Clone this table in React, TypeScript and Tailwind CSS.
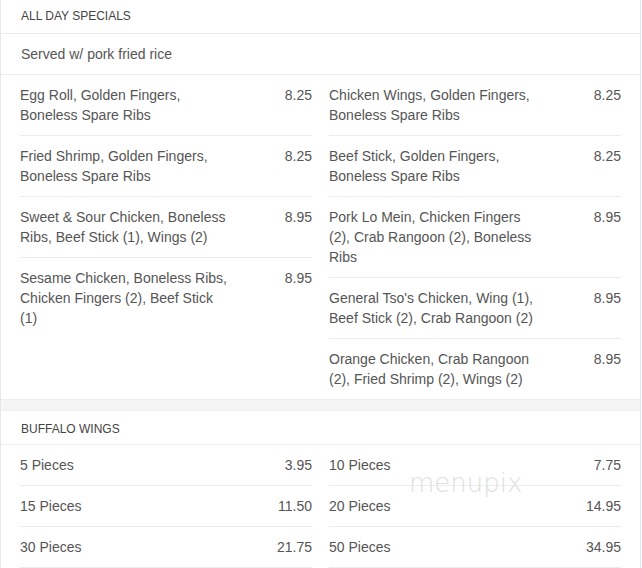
import React from 'react';

type Item = { name: string; price: string };

const specialsLeft: Item[] = [
  { name: 'Egg Roll, Golden Fingers, Boneless Spare Ribs', price: '8.25' },
  { name: 'Fried Shrimp, Golden Fingers, Boneless Spare Ribs', price: '8.25' },
  { name: 'Sweet & Sour Chicken, Boneless Ribs, Beef Stick (1), Wings (2)', price: '8.95' },
  { name: 'Sesame Chicken, Boneless Ribs, Chicken Fingers (2), Beef Stick (1)', price: '8.95' },
];

const specialsRight: Item[] = [
  { name: 'Chicken Wings, Golden Fingers, Boneless Spare Ribs', price: '8.25' },
  { name: 'Beef Stick, Golden Fingers, Boneless Spare Ribs', price: '8.25' },
  { name: 'Pork Lo Mein, Chicken Fingers (2), Crab Rangoon (2), Boneless Ribs', price: '8.95' },
  { name: "General Tso's Chicken, Wing (1), Beef Stick (2), Crab Rangoon (2)", price: '8.95' },
  { name: 'Orange Chicken, Crab Rangoon (2), Fried Shrimp (2), Wings (2)', price: '8.95' },
];

const wingsLeft: Item[] = [
  { name: '5 Pieces', price: '3.95' },
  { name: '15 Pieces', price: '11.50' },
  { name: '30 Pieces', price: '21.75' },
];

const wingsRight: Item[] = [
  { name: '10 Pieces', price: '7.75' },
  { name: '20 Pieces', price: '14.95' },
  { name: '50 Pieces', price: '34.95' },
];

const ItemList: React.FC<{ items: Item[]; bottomBorder?: boolean }> = ({ items, bottomBorder }) => (
  <div className="flex flex-col">
    {items.map((item, i) => (
      <div
        key={item.name}
        className={`flex justify-between items-start py-[10px] ${i < items.length - 1 || bottomBorder ? 'border-b border-[#ececec]' : ''}`}
      >
        <span className="w-[210px] leading-[20px]">{item.name}</span>
        <span className="leading-[20px]">{item.price}</span>
      </div>
    ))}
  </div>
);

const SectionHeader: React.FC<{ title: string; first?: boolean }> = ({ title, first }) => (
  <div
    className={`px-5 border-b border-[#ececec] text-[12px] leading-[15px] text-[#444] uppercase ${first ? 'pt-[9px] pb-[9px]' : 'pt-[11px] pb-[7px]'}`}
  >
    {title}
  </div>
);

export default function App() {
  return (
    <div
      className="w-[642px] h-[568px] overflow-hidden bg-white text-[14px] text-[#555]"
      style={{ fontFamily: '"Liberation Sans", Arial, sans-serif' }}
    >
      <div className="relative w-[641px] border-x border-[#e6e6ec]">
        <section>
          <SectionHeader title="All Day Specials" first />
          <div className="px-5 py-[10px] leading-[20px] border-b border-[#ececec]">Served w/ pork fried rice</div>
          <div className="grid grid-cols-2 gap-x-[17px] px-[19px]">
            <ItemList items={specialsLeft} />
            <ItemList items={specialsRight} />
          </div>
        </section>

        <div className="h-[12px] bg-[#f5f5f5] border-y border-[#eeeeee]" />

        <section>
          <SectionHeader title="Buffalo Wings" />
          <div className="grid grid-cols-2 gap-x-[17px] px-[19px]">
            <ItemList items={wingsLeft} bottomBorder />
            <ItemList items={wingsRight} bottomBorder />
          </div>
        </section>

        <div
          className="absolute left-[408px] top-[470px] text-[26px] leading-none text-[#e0e0e0] pointer-events-none"
          style={{ fontFamily: '"DejaVu Sans", sans-serif', fontWeight: 200 }}
        >
          menupix
        </div>
      </div>
    </div>
  );
}
